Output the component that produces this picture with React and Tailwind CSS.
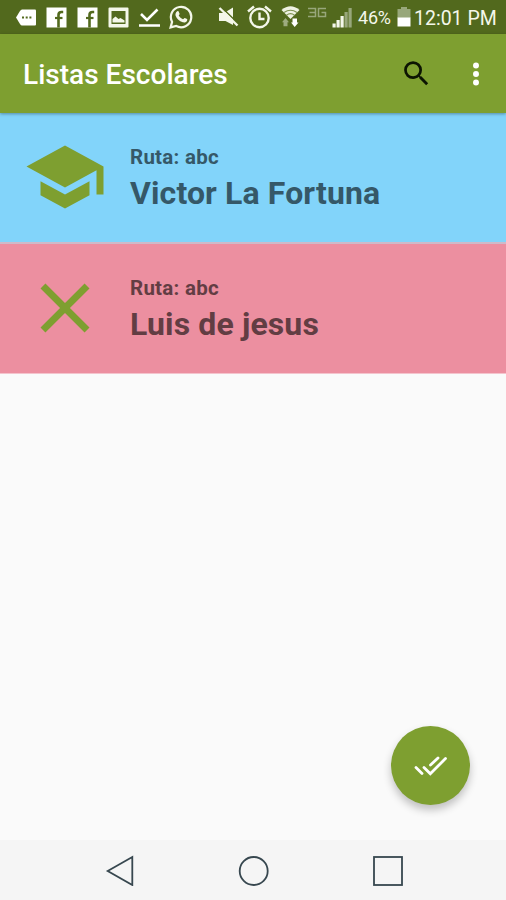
const students = [
  { id: 1, route: "abc", name: "Victor La Fortuna", onBoard: true },
  { id: 2, route: "abc", name: "Luis de jesus", onBoard: false },
];

function FacebookIcon() {
  return (
    <svg width="21" height="21" viewBox="0 0 21 21">
      <rect x=".5" y=".5" width="20" height="20" fill="#fff" />
      <path fill="none" stroke="#52691d" strokeWidth="2.600" d="M12.500 20.500V8q0-3 3-3h1.700" />
      <path stroke="#52691d" strokeWidth="2.200" d="M9 11h7.500" />
    </svg>
  );
}

function StatusBar() {
  return (
    <div className="flex h-[34px] items-center bg-[#52691d] text-[#f4f7ea]">
      {/* Notifications */}
      <div className="ml-4 flex w-[202px] items-center">
        <svg className="mr-[10px]" width="20" height="17" viewBox="0 0 20 17">
          <path fill="#fff" d="M6 .5h13q1 0 1 1v14q0 1-1 1H6q-1 0-2-1.500L0 8.500 4 2q1-1.500 2-1.500z" />
          <path fill="#52691d" d="M6 7.500h2v2H6zM9.700 7.500h2v2h-2zM13.400 7.500h2v2h-2z" />
        </svg>
        <div className="mr-[10px]"><FacebookIcon /></div>
        <div className="mr-[10px]"><FacebookIcon /></div>
        <svg className="mr-[10px]" width="21" height="21" viewBox="0 0 21 21">
          <path fill="#f4f7ea" fillRule="evenodd" d="M1.500.5h18q1 0 1 1v18q0 1-1 1h-18q-1 0-1-1v-18q0-1 1-1zM3.500 4v13h14V4z" />
          <path fill="#f4f7ea" d="M4.500 15.500v-3.500l3-2.500 3 2.500 2-1 4 2.500v2z" />
        </svg>
        <svg className="mr-[9px]" width="21" height="21" viewBox="0 0 21 21">
          <path fill="none" stroke="#fff" strokeWidth="2.600" d="M2 7l6 6L18.500 2.500M0 18.500h21" />
        </svg>
        <svg width="24" height="24" viewBox="0 0 24 24">
          <path fill="none" stroke="#f4f7ea" strokeWidth="2.200" d="M1.600 22.400l1.500-5.500A10.200 10.200 0 1 1 7.200 21z" />
          <path fill="#f4f7ea" d="M8.300 6.300c.4-.3 1-.3 1.300.3l1 2.200c.2.500-.8 1.300-.8 1.700 1 1.900 2.300 3 4.200 3.700.5 0 1.200-1.500 1.800-1.300l2.300 1.200c.4.300.1 1.600-.3 2.100-1 1.100-2.500 1.500-4 1.100-3.500-1-6-3.500-7.200-6.500-.5-1.800.2-3.500 1.700-4.500z" />
        </svg>
      </div>

      {/* System icons */}
      <svg className="mr-[8px]" width="21" height="20" viewBox="0 0 21 20">
        <path fill="#f4f7ea" d="M1 6h5l9-5.500v17.500L7.500 14H1z" />
        <path stroke="#52691d" strokeWidth="1.600" d="M4 .8l17 16.500" />
        <path stroke="#f4f7ea" strokeWidth="2.400" d="M1.500 1L19.500 18.500" />
      </svg>
      <svg className="mr-[9px]" width="25" height="24" viewBox="0 0 25 24">
        <g fill="none" stroke="#f4f7ea" strokeWidth="2.400">
          <circle cx="12.500" cy="13" r="9.200" />
          <path d="M1 6.500L7 1.500M24 6.500L18 1.500M12.500 7.500V14h5" />
        </g>
      </svg>
      <svg className="mr-[7px]" width="19" height="22" viewBox="0 0 19 22">
        <path fill="#eef2e2" d="M.5 4q9-7.500 18 0L9.500 13z" />
        <path fill="none" stroke="#7d9150" strokeWidth="1.200" d="M3 6.500q6.500-4.500 13 0M5.500 9.200q4-3 8 0" />
        <path fill="#9eab80" d="M4.500 12l3.500 4.300H6.500v4h-4v-4H1z" />
        <path fill="#fff" d="M11.500 12.500h4.500v4h1.500L13.700 21 10 16.500h1.500z" />
      </svg>
      <svg className="mr-[5px] mb-[10px]" width="20" height="11" viewBox="0 0 20 11">
        <path fill="none" stroke="#98a77b" strokeWidth="1.500" d="M1 1.500h7.500v8H1M2.500 5.500h6M19 1.500h-7.500v8h7v-4h-4" />
      </svg>
      <svg className="mr-[6px]" width="20" height="21" viewBox="0 0 20 21">
        <path fill="#f4f7ea" d="M.5 16.500h3.200V20.500H.5zM4.500 13h3.200v7.500H4.500zM8.500 9h3.200v11.500H8.500z" />
        <path fill="#98a77b" d="M12.500 5h3.200v15.500h-3.200zM16.500 1h3.200v19.500h-3.200z" />
      </svg>
      <span className="mt-[2px] w-[39px] text-[18px] leading-none tracking-[-0.200px] whitespace-nowrap">46%</span>
      <svg className="mr-[3px]" width="14" height="20" viewBox="0 0 14 20">
        <path fill="#98a77b" d="M4 0h6v2h3.500v9H.5V2H4z" />
        <path fill="#fff" d="M.5 10.500h13v9H.5z" />
      </svg>
      <span className="mt-[3px] text-[19.500px] leading-none whitespace-nowrap">12:01 PM</span>
    </div>
  );
}

function AppBar() {
  return (
    <header className="relative z-10 flex h-[79px] items-center bg-[#7e9f30] pl-[23px] shadow-[0_1px_3px_rgba(0,0,0,0.350)]">
      <h1 className="mt-[2px] flex-1 text-[28px] font-medium tracking-[0.020px] text-white">Listas Escolares</h1>
      <svg className="mr-[26px]" width="33" height="33" viewBox="0 0 24 24">
        <path fill="#0c1402" d="M15.500 14h-.79l-.28-.27A6.471 6.471 0 0 0 16 9.500 6.500 6.500 0 1 0 9.500 16c1.610 0 3.090-.59 4.230-1.570l.27.28v.79l5 4.990L20.490 19l-4.990-5zm-6 0C7.010 14 5 11.990 5 9.500S7.010 5 9.500 5 14 7.010 14 9.500 11.990 14 9.500 14z" />
      </svg>
      <svg className="mr-[13px]" width="34" height="34" viewBox="0 0 24 24">
        <g fill="#fff">
          <circle cx="12" cy="6" r="2.100" />
          <circle cx="12" cy="12" r="2.100" />
          <circle cx="12" cy="18" r="2.100" />
        </g>
      </svg>
    </header>
  );
}

function StudentRow({ student }) {
  return (
    <li
      className={`flex pl-[23px] ${
        student.onBoard
          ? "h-[131px] border-b-2 border-[#cfb9c8] bg-[#82d4fa] text-[#355868]"
          : "h-[130px] border-b border-[#f4c4cd] bg-[#ec8fa0] text-[#623d43]"
      }`}
    >
      <svg className="mt-[22px] mr-[23px] shrink-0" width="84" height="84" viewBox="0 0 24 24" fill="#7e9f30">
        {student.onBoard ? (
          <path d="M5 13.180v4L12 21l7-3.820v-4L12 17l-7-3.820zM12 3L1 9l11 6 9-4.910V17h2V9L12 3z" />
        ) : (
          <path d="M19 6.410L17.590 5 12 10.590 6.410 5 5 6.410 10.590 12 5 17.590 6.410 19 12 13.410 17.590 19 19 17.590 13.410 12z" />
        )}
      </svg>
      <div className="pt-8 font-bold">
        <p className="text-[20.500px] leading-6 tracking-[0.250px]">Ruta: {student.route}</p>
        <p className="mt-[6px] text-[32px] leading-9 tracking-[0.120px]">{student.name}</p>
      </div>
    </li>
  );
}

function NavBar() {
  return (
    <nav className="flex h-[60px] items-center bg-[#f5f5f5] pl-[105px]">
      <svg width="30" height="32" viewBox="0 0 30 32">
        <path fill="none" stroke="#37474f" strokeWidth="1.800" d="M2.700 17L27.300 3v28z" />
      </svg>
      <svg className="ml-[103px]" width="32" height="32" viewBox="0 0 32 32">
        <circle cx="15.700" cy="17" r="14" fill="none" stroke="#37474f" strokeWidth="1.800" />
      </svg>
      <svg className="ml-[102px]" width="32" height="32" viewBox="0 0 32 32">
        <rect x="2" y="3" width="28" height="28" fill="none" stroke="#37474f" strokeWidth="1.800" />
      </svg>
    </nav>
  );
}

export default function App() {
  return (
    <div className="relative flex h-[900px] w-[506px] flex-col overflow-hidden bg-[#fafafa] font-['Roboto',sans-serif]">
      <StatusBar />
      <AppBar />
      <ul className="flex-1">
        {students.map((student) => (
          <StudentRow key={student.id} student={student} />
        ))}
      </ul>
      <NavBar />

      {/* Mark all button */}
      <button className="absolute right-[36px] bottom-[95px] h-[79px] w-[79px] rounded-full bg-[#7e9f30] shadow-[0_5px_9px_rgba(0,0,0,0.240)]">
        <svg width="79" height="79" viewBox="0 0 79 79">
          <path
            fill="none"
            stroke="#fff"
            strokeWidth="2.800"
            strokeLinecap="round"
            d="M25 41.500l6 6M33 41.500l6.300 6.300L54.500 32.500M39.500 39l7.500-7"
          />
        </svg>
      </button>
    </div>
  );
}
